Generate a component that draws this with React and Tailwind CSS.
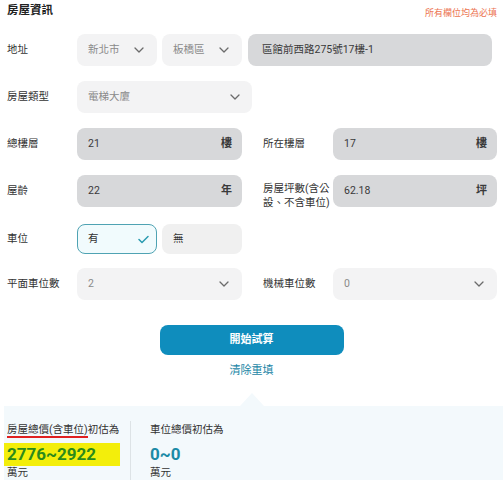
import React from 'react';

const font = { fontFamily: 'Roboto, "Noto Sans CJK TC", sans-serif' };

function Chevron() {
  return (
    <svg width="10" height="6" viewBox="0 0 10 6" fill="none" className="shrink-0">
      <path d="M1 1l4 4 4-4" stroke="#6b6b6b" strokeWidth="1.3" strokeLinecap="round" strokeLinejoin="round" />
    </svg>
  );
}

function Select({ value, className = '', pr = 'pr-[13px]' }) {
  return (
    <div className={`flex items-center justify-between h-full rounded-lg bg-[#f3f3f4] pl-[11px] ${pr} ${className}`}>
      <span className="text-[10.5px] text-[#8a8a8a]">{value}</span>
      <Chevron />
    </div>
  );
}

function Input({ value, unit, className = '', pl = 'pl-[11px]' }) {
  return (
    <div className={`flex items-center justify-between h-full rounded-lg bg-[#d7d8da] ${pl} pr-[10px] ${className}`}>
      <span className="text-[10.5px] text-[#3a3a3a]">{value}</span>
      {unit && <span className="text-[11px] font-bold text-[#3a3a3a]">{unit}</span>}
    </div>
  );
}

function Label({ children, className = '' }) {
  return <div className={`w-[70px] shrink-0 text-[10.5px] leading-[14px] text-[#333] ${className}`}>{children}</div>;
}

export default function App() {
  return (
    <div className="w-[503px] h-[480px] bg-white overflow-hidden relative" style={font}>
      <div className="pl-[7px] pr-[6px]">
        <div className="h-[22px] flex items-center justify-between">
          <span className="text-[11.5px] font-bold text-[#222]">房屋資訊</span>
          <span className="text-[9px] text-[#ec7350] mt-[6px]">所有欄位均為必填</span>
        </div>

        <div className="mt-[12px] h-[32px] flex items-center">
          <Label>地址</Label>
          <Select value="新北市" className="w-[80px]" />
          <Select value="板橋區" className="w-[80px] ml-[5px]" />
          <Input value="區館前西路275號17樓-1" className="w-[244px] ml-[6px]" pl="pl-[14px]" />
        </div>

        <div className="mt-[15px] h-[32px] flex items-center">
          <Label>房屋類型</Label>
          <Select value="電梯大廈" className="w-[175px]" pr="pr-[12px]" />
        </div>

        <div className="mt-[15px] h-[32px] flex items-center">
          <Label>總樓層</Label>
          <Input value="21" unit="樓" className="w-[165px]" />
          <Label className="ml-[21px]">所在樓層</Label>
          <Input value="17" unit="樓" className="w-[164px]" />
        </div>

        <div className="mt-[15px] h-[32px] flex items-center">
          <Label>屋齡</Label>
          <Input value="22" unit="年" className="w-[165px]" />
          <Label className="ml-[21px] mt-[10px] whitespace-nowrap">
            房屋坪數(含公
            <br />
            設、不含車位)
          </Label>
          <Input value="62.18" unit="坪" className="w-[164px]" />
        </div>

        <div className="mt-[17px] h-[30px] flex items-center">
          <Label>車位</Label>
          <div className="w-[80px] h-full rounded-lg border border-[#4fa3b3] bg-[#f1fbfd] flex items-center justify-between pl-[10px] pr-[7px]">
            <span className="text-[10.5px] text-[#333]">有</span>
            <svg width="11" height="9" viewBox="0 0 11 9" fill="none">
              <path d="M1 4.5l3 3L10 1.5" stroke="#2a9bb0" strokeWidth="1.5" strokeLinecap="round" strokeLinejoin="round" />
            </svg>
          </div>
          <div className="w-[80px] h-full ml-[5px] rounded-lg bg-[#f0f0f0] flex items-center pl-[11px]">
            <span className="text-[10.5px] text-[#333]">無</span>
          </div>
        </div>

        <div className="mt-[14px] h-[32px] flex items-center">
          <Label>平面車位數</Label>
          <Select value="2" className="w-[165px]" />
          <Label className="ml-[21px]">機械車位數</Label>
          <Select value="0" className="w-[164px]" />
        </div>
      </div>

      <div className="flex flex-col items-center">
        <button className="mt-[25px] w-[184px] h-[30px] rounded-lg bg-[#0f8dbd] text-white text-[11px] font-bold">
          開始試算
        </button>
        <span className="mt-[8px] text-[11px] leading-[15px] text-[#1b86a6]">清除重填</span>
      </div>

      <div className="relative mt-[28px] ml-[4px] h-[74px] bg-[#f3f9fc]">
        <div className="absolute left-[236px] -top-[13px] w-0 h-0 border-l-[12px] border-r-[12px] border-b-[13px] border-l-transparent border-r-transparent border-b-[#f3f9fc]" />
        <div className="flex pt-[17px]">
          <div className="w-[126px]">
            <div className="pl-[3px] text-[10.5px] leading-[14px] text-[#333]">
              <span className="border-b-2 border-[#e02020]">房屋總價(含車位)</span>初估為
            </div>
            <div className="mt-[6px] w-[116px] h-[23px] bg-[#f3ee0b] pl-[3px] flex items-center">
              <span className="text-[17px] font-bold text-[#2b8a1c] leading-none">2776~2922</span>
            </div>
            <div className="pl-[3px] mt-[1px] text-[10.5px] leading-[12px] text-[#333]">萬元</div>
          </div>
          <div className="w-px bg-[#dde3e6] mt-[-2px] h-[60px]" />
          <div className="pl-[19px]">
            <div className="text-[10.5px] leading-[14px] text-[#333]">車位總價初估為</div>
            <div className="mt-[6px] h-[23px] flex items-center">
              <span className="text-[17px] font-bold text-[#1b8aa6] leading-none">0~0</span>
            </div>
            <div className="mt-[1px] text-[10.5px] leading-[12px] text-[#333]">萬元</div>
          </div>
        </div>
      </div>
    </div>
  );
}
